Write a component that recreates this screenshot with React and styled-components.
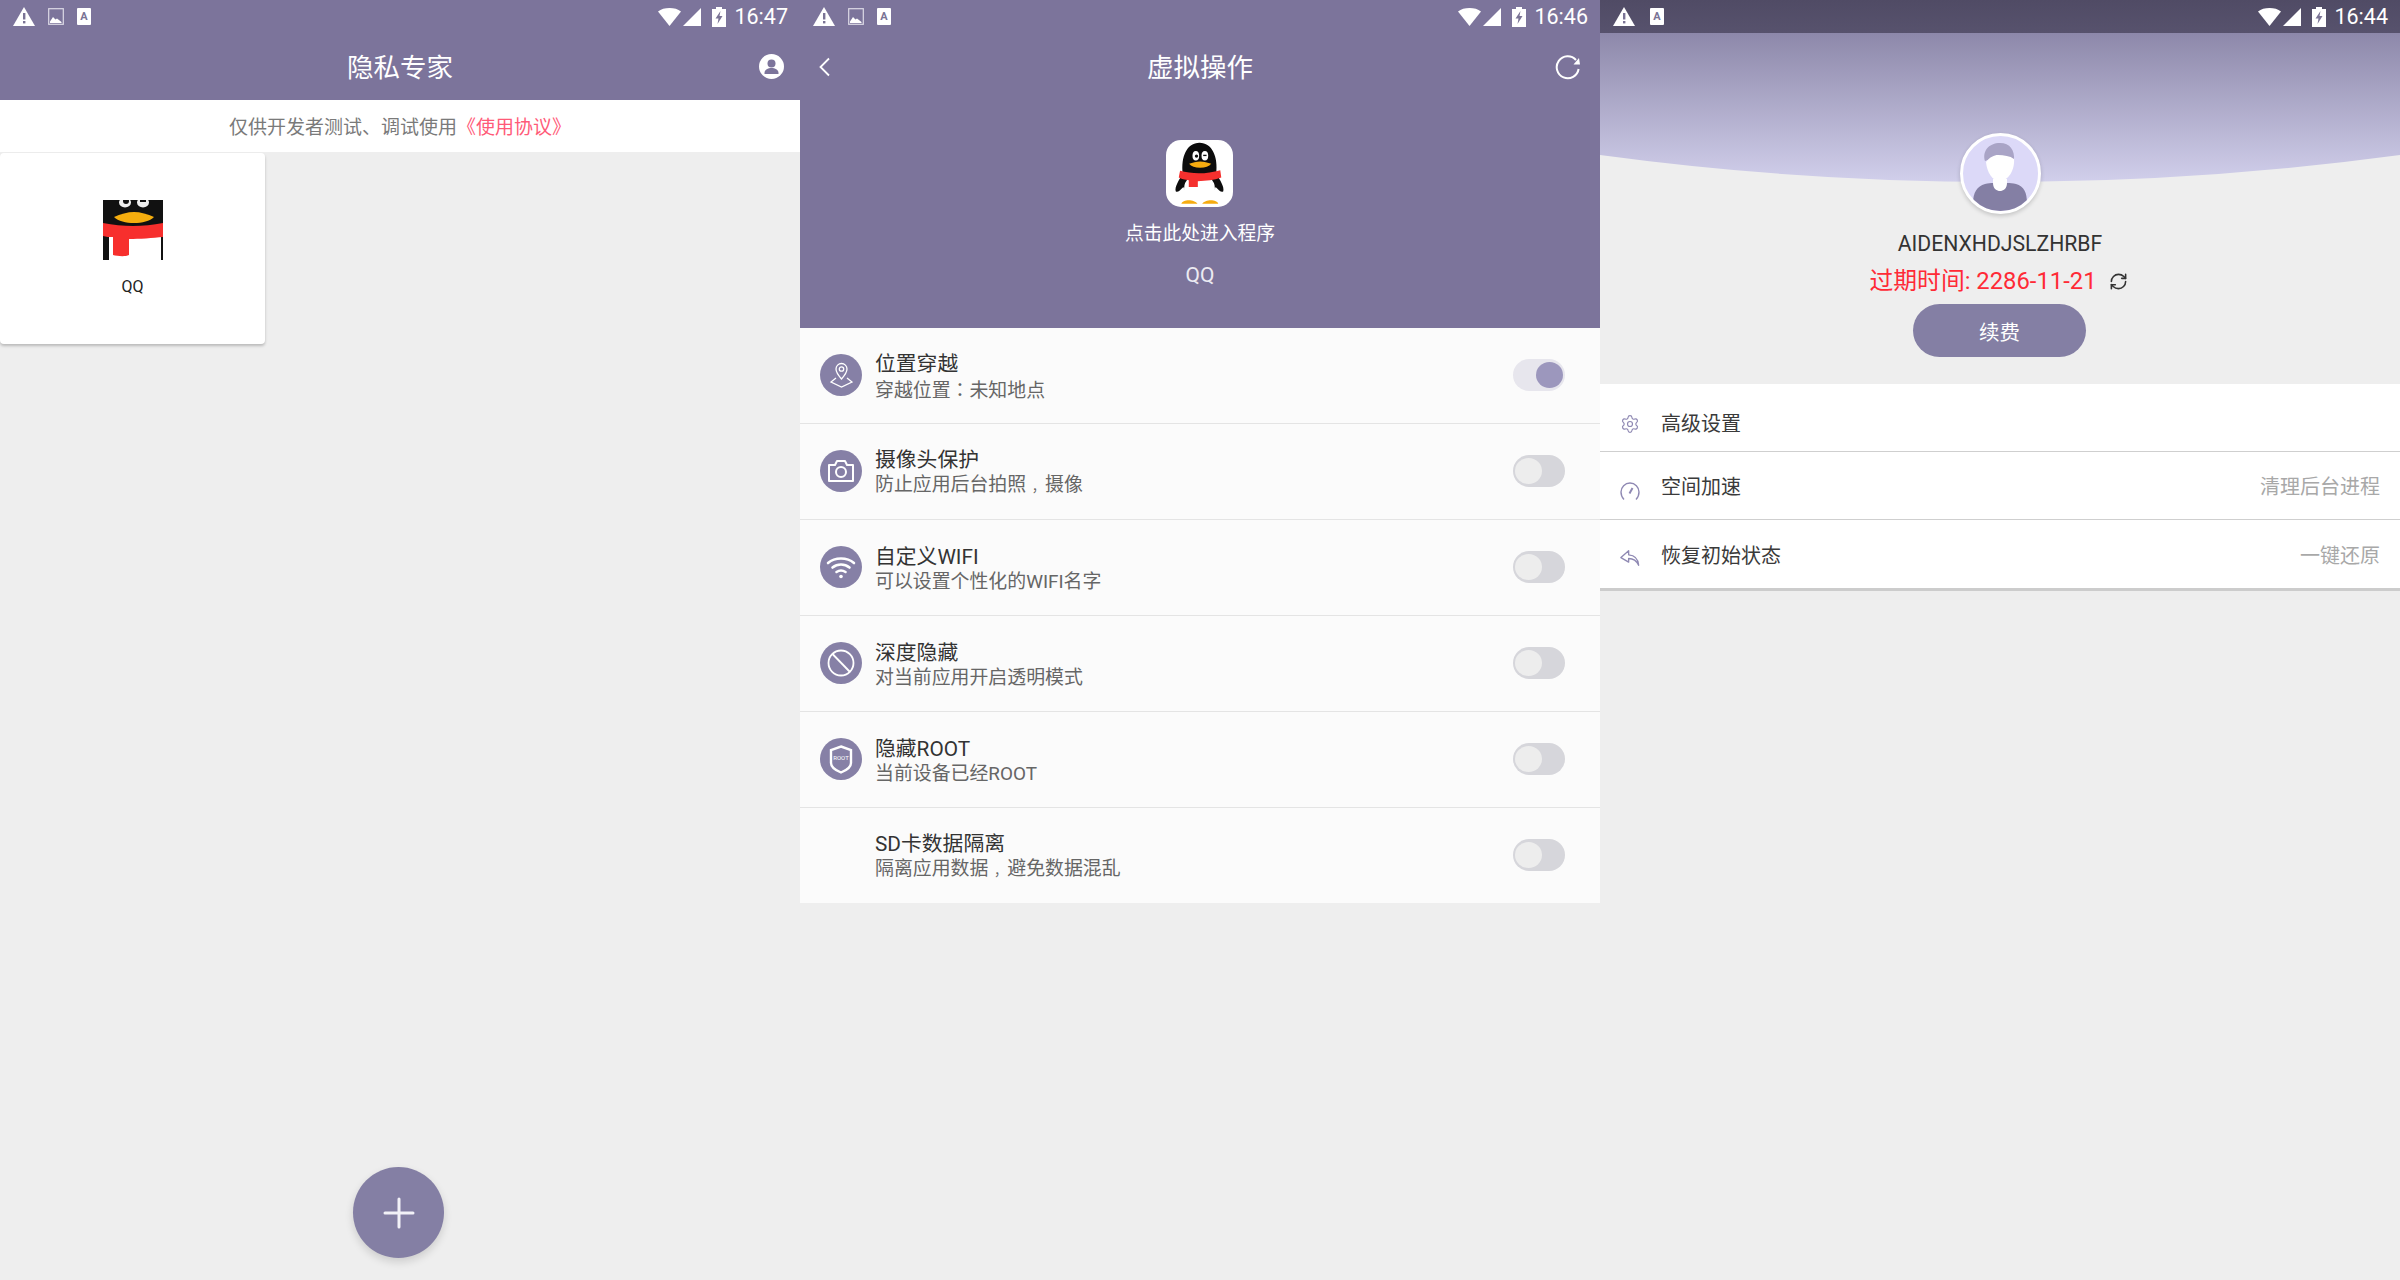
import React from "react";
import styled, { createGlobalStyle } from "styled-components";
import { Settings, RefreshCw } from "lucide-react";

const Global = createGlobalStyle`
  html, body { margin: 0; padding: 0; background: #eee; }
  * { box-sizing: border-box; }
  body { font-family: Roboto, "Noto Sans CJK SC", sans-serif; }
`;

const Page = styled.div`
  display: flex;
  width: 2400px;
  height: 1280px;
  overflow: hidden;
`;
const Panel = styled.section`
  position: relative;
  width: 800px;
  height: 1280px;
  flex: none;
  background: #eeeeee;
  display: flex;
  flex-direction: column;
`;
const StatusBarBox = styled.div`
  height: 33px;
  flex: none;
  display: flex;
  align-items: center;
  justify-content: space-between;
  padding: 0 12px 0 13px;
  background: ${(p) => (p.$dark ? "linear-gradient(#504b65, #57526d)" : "#7c749b")};
  color: #fff;
`;
const IconGroup = styled.div`
  display: flex;
  align-items: center;
  gap: ${(p) => p.$gap || 0}px;
`;
const Spacer = styled.span`
  width: ${(p) => p.$w}px;
`;
const Clock = styled.span`
  font-size: 21.5px;
  line-height: 33px;
  margin-left: 8px;
  width: 54px;
  text-align: right;
`;
const NavBar = styled.header`
  height: 67px;
  flex: none;
  display: grid;
  grid-template-columns: 1fr auto 1fr;
  align-items: center;
  padding: 0 ${(p) => p.$pad}px;
  background: #7c749b;
  color: #fff;
`;
const NavTitle = styled.h1`
  margin: 0;
  padding-top: 2px;
  font-size: 26.5px;
  font-weight: 400;
  line-height: 65px;
`;
const NavSlot = styled.div`
  display: flex;
  align-items: center;
  justify-content: ${(p) => (p.$end ? "flex-end" : "flex-start")};
`;
const Notice = styled.div`
  height: 52px;
  flex: none;
  padding-bottom: 2px;
  display: flex;
  align-items: center;
  justify-content: center;
  background: #fff;
  font-size: 19px;
  color: #7a7a7a;
`;
const NoticeLink = styled.span`
  color: #ff5a78;
`;
const Card = styled.div`
  width: 265px;
  height: 191px;
  margin-top: 1px;
  padding-top: 47px;
  background: #fff;
  border-radius: 4px;
  box-shadow: 0 2px 3px rgba(0, 0, 0, 0.22);
  display: flex;
  flex-direction: column;
  align-items: center;
`;
const CardLabel = styled.span`
  margin-top: 17px;
  font-size: 16px;
  line-height: 20px;
  color: #222;
`;
const Fab = styled.button`
  position: absolute;
  left: 353px;
  top: 1167px;
  width: 91px;
  height: 91px;
  border: 0;
  padding: 0;
  border-radius: 50%;
  background: #847fa4;
  box-shadow: 0 4px 8px rgba(0, 0, 0, 0.14);
  display: flex;
  align-items: center;
  justify-content: center;
`;

const Hero = styled.div`
  height: 328px;
  flex: none;
  background: #7c749b;
`;
const AppInfo = styled.div`
  display: flex;
  flex-direction: column;
  align-items: center;
  color: #fff;
  padding-top: 40px;
`;
const AppIconBox = styled.div`
  width: 67px;
  height: 67px;
  margin-left: -1px;
  border-radius: 15px;
  background: #fff;
  overflow: hidden;
`;
const Enter = styled.span`
  margin-top: 14px;
  font-size: 18.8px;
  line-height: 26px;
`;
const AppName = styled.span`
  margin-top: 15px;
  font-size: 21px;
  line-height: 26px;
  color: #ecebf2;
`;
const SwitchList = styled.div`
  background: #fbfbfb;
  display: flex;
  flex-direction: column;
`;
const SwitchRow = styled.div`
  height: 96px;
  display: flex;
  align-items: center;
  padding: 0 35px 0 20px;
  border-bottom: 1px solid #e4e4e4;
  &:last-child { height: 95px; border-bottom: 0; }
`;
const RoundIcon = styled.div`
  width: 42px;
  height: 42px;
  flex: none;
  margin-top: -1px;
  border-radius: 50%;
  background: ${(p) => (p.$empty ? "transparent" : "#8680a6")};
  display: flex;
  align-items: center;
  justify-content: center;
`;
const RowText = styled.div`
  margin-left: 13px;
  flex: 1;
  display: flex;
  flex-direction: column;
`;
const RowTitle = styled.span`
  padding-top: 3px;
  font-size: 20.8px;
  line-height: 24px;
  color: #333;
`;
const RowSub = styled.span`
  font-size: 18.9px;
  line-height: 25px;
  color: #666;
`;
const Colon = styled.span`
  font-family: "Noto Sans CJK TC", sans-serif;
`;
const Comma = styled.span`
  padding-left: 0.3em;
  font-size: 0.7em;
  padding-left: 0.43em;
`;
const Track = styled.div`
  width: 52px;
  height: 32px;
  flex: none;
  margin-top: -1px;
  border-radius: 16px;
  padding: 3px 2px;
  display: flex;
  justify-content: ${(p) => (p.$on ? "flex-end" : "flex-start")};
  background: ${(p) => (p.$on ? "#e7e6ed" : "#d6d6db")};
`;
const Thumb = styled.div`
  width: 27px;
  height: 26px;
  border-radius: 50%;
  background: ${(p) => (p.$on ? "#9c97bd" : "#ededed")};
`;

const Wave = styled.svg`
  display: block;
  width: 800px;
  height: 149px;
  flex: none;
`;
const Profile = styled.div`
  margin-top: -49px;
  display: flex;
  flex-direction: column;
  align-items: center;
  position: relative;
`;
const Avatar = styled.div`
  width: 81px;
  height: 81px;
  border-radius: 50%;
  border: 3px solid #fff;
  background: #dcd9f8;
  overflow: hidden;
  box-shadow: 0 2px 4px rgba(0, 0, 0, 0.18);
`;
const UserName = styled.div`
  margin-top: 16px;
  font-size: 21.2px;
  line-height: 28px;
  color: #333;
`;
const ExpiryLine = styled.div`
  margin-top: 7px;
  height: 32px;
  padding-right: 3px;
  display: flex;
  align-items: center;
  gap: 12px;
  color: #ff2a36;
  font-size: 23.8px;
  line-height: 32px;
`;
const RenewButton = styled.button`
  margin-top: 7px;
  margin-left: -1px;
  width: 173px;
  height: 53px;
  border: 0;
  border-radius: 27px;
  background: #847fa4;
  color: #fff;
  font-family: inherit;
  font-size: 20.5px;
`;
const Menu = styled.div`
  margin-top: 27px;
  background: #fff;
  display: flex;
  flex-direction: column;
  border-bottom: 3px solid #cccccc;
`;
const MenuRow = styled.div`
  height: ${(p) => p.$h}px;
  display: flex;
  align-items: center;
  padding: ${(p) => p.$top}px 20px 0 20px;
  border-bottom: 1px solid #cfcfcf;
  &:last-child { border-bottom: 0; }
`;
const MenuIcon = styled.div`
  width: 20px;
  flex: none;
  display: flex;
  justify-content: center;
  color: #8f89b3;
  margin-top: ${(p) => p.$shift || 0}px;
`;
const MenuLabel = styled.span`
  margin-left: 21px;
  flex: 1;
  font-size: 20px;
  line-height: 28px;
  color: #3a3a3a;
`;
const MenuHint = styled.span`
  font-size: 20px;
  line-height: 28px;
  color: #a8a8a8;
`;

const Warn = () => (
  <svg width="22" height="19" viewBox="0 0 22 19">
    <path d="M11 0 22 19H0Z" fill="#fff" />
    <rect x="10" y="6" width="2.4" height="6.5" fill="#7a7395" />
    <rect x="10" y="14" width="2.4" height="2.4" fill="#7a7395" />
  </svg>
);
const Pic = () => (
  <svg width="16" height="17" viewBox="0 0 16 17">
    <rect x=".7" y=".7" width="14.6" height="15.6" fill="none" stroke="#dcdae6" strokeWidth="1.2" />
    <path d="M2 13.5 5 9l2.5 2.5 1.5-1 4.5 3.5V15H2Z" fill="#fff" />
  </svg>
);
const Doc = () => (
  <svg width="14" height="17" viewBox="0 0 14 17">
    <path d="M1 0H13a1 1 0 0 1 1 1V16a1 1 0 0 1-1 1H1a1 1 0 0 1-1-1V1a1 1 0 0 1 1-1Z" fill="#fff" />
    <text x="7" y="12" textAnchor="middle" fontSize="11" fontWeight="700" fontFamily="Roboto" fill="#7a7395">A</text>
  </svg>
);
const WifiFull = () => (
  <svg width="23" height="18" viewBox="0 0 23 18">
    <path d="M0 3.5C3 1 7 0 11.5 0S20 1 23 3.5L11.5 18Z" fill="#fff" />
  </svg>
);
const Signal = () => (
  <svg width="18" height="18" viewBox="0 0 18 18">
    <path d="M18 0V18H0Z" fill="#fff" />
  </svg>
);
const Battery = () => (
  <svg width="14" height="20" viewBox="0 0 14 20">
    <path d="M4 0H10V2H14V20H0V2H4Z" fill="#fff" />
    <path d="M8.5 4 3.5 11.5H6.5L5.5 17 10.5 9H7.5Z" fill="#7a7395" />
  </svg>
);

const StatusBar = ({ time, dark, compact }) => (
  <StatusBarBox $dark={dark}>
    <IconGroup $gap={compact ? 15 : 13}>
      <Warn />
      {!compact && <Pic />}
      <Doc />
    </IconGroup>
    <IconGroup>
      <WifiFull />
      <Spacer $w={2} />
      <Signal />
      <Spacer $w={11} />
      <Battery />
      <Clock>{time}</Clock>
    </IconGroup>
  </StatusBarBox>
);

const UserBadge = () => (
  <svg width="25" height="25" viewBox="0 0 25 25">
    <circle cx="12.5" cy="12.5" r="12.5" fill="#fff" />
    <circle cx="12.5" cy="9.5" r="4" fill="#7c749b" />
    <path d="M5.5 19c0-3.500 3.500-5 7-5s7 1.500 7 5v1h-14Z" fill="#7c749b" />
  </svg>
);
const Back = () => (
  <svg width="14" height="20" viewBox="0 0 14 20">
    <path d="M11 1.500 2.500 10l8.500 8.500" fill="none" stroke="#fff" strokeWidth="1.8" />
  </svg>
);
const Reload = () => (
  <svg width="27" height="26" viewBox="0 0 27 26">
    <path d="M21 6A11 11 0 1 0 23.600 15" fill="none" stroke="#fff" strokeWidth="2" />
    <path d="M18.500 10.500 25 10.500 24 4Z" fill="#fff" />
  </svg>
);

const PenguinFull = () => (
  <svg width="67" height="67" viewBox="0 0 200 200">
    <path d="M52 140C42 150 34 158 29 153c-4-12 10-34 21-52C44 50 62 8 100 8s56 42 50 93c11 18 25 40 21 52-5 5-13-3-23-13-6 28-90 28-96 0Z" fill="#0d0d0d" />
    <ellipse cx="100" cy="144" rx="46" ry="42" fill="#fff" />
    <path d="M42 92c36 10 80 10 120-2l3 22c-22 8-44 10-70 11v17H68v-20c-12-1-22-4-30-8Z" fill="#f5302e" />
    <ellipse cx="89" cy="47" rx="10" ry="14" fill="#fff" />
    <ellipse cx="116" cy="47" rx="10" ry="14" fill="#fff" />
    <circle cx="91" cy="48" r="5" fill="#111" />
    <rect x="111" y="44" width="10" height="4" fill="#111" />
    <path d="M69 71c10-4 22-7 33-7s23 3 33 7c-6 8-18 12-33 12s-27-4-33-12Z" fill="#f6ac10" />
    <path d="M46 190c1-6 12-10 22-10 10 0 22 4 26 10ZM108 190c4-6 16-10 26-10s21 4 22 10Z" fill="#f6ac10" />
  </svg>
);
const PenguinCrop = () => (
  <svg width="60" height="60" viewBox="0 0 60 60">
    <rect width="60" height="60" fill="#111" />
    <ellipse cx="22" cy="2.500" rx="6" ry="5" fill="#eee" />
    <ellipse cx="40" cy="2.500" rx="6" ry="5" fill="#eee" />
    <ellipse cx="23" cy="1" rx="3" ry="3" fill="#111" />
    <rect x="37" y="0" width="6" height="2" fill="#111" />
    <path d="M11 17c6-3 14-5 20-5s14 2 20 5c-4 4-12 6-20 6s-16-2-20-6Z" fill="#f5ad0e" />
    <rect x="6" y="37" width="52" height="23" fill="#fff" />
    <path d="M0 23c20 4 40 4 60 0V37c-10 1-24 2-34 2V55c-4 2-12 1-16 0V37C6 37 3 37 0 36Z" fill="#f72f2d" />
  </svg>
);

const PinGlyph = () => (
  <svg width="23" height="26" viewBox="0 0 23 26" fill="none" stroke="#fff" strokeWidth="1.3">
    <path d="M11.500 17C8 13 6 10 6 7a5.500 5.500 0 0 1 11 0c0 3-2 6-5.500 10Z" />
    <circle cx="11.500" cy="7" r="2.200" />
    <path d="M6 16 1 20l10.500 5L22 20l-5-4" />
  </svg>
);
const CameraGlyph = () => (
  <svg width="28" height="26" viewBox="0 0 28 26" fill="none" stroke="#fff" strokeWidth="2">
    <path d="M2 7h6l2-4h8l2 4h6v16H2Z" strokeLinejoin="round" />
    <circle cx="14" cy="14" r="5" />
  </svg>
);
const WifiGlyph = () => (
  <svg width="30" height="23" viewBox="0 0 30 23" fill="none" stroke="#fff" strokeWidth="2.600" strokeLinecap="round">
    <path d="M2 7c7-6 19-6 26 0" />
    <path d="M6.500 11.500c5-4 12-4 17 0" />
    <path d="M10.500 16c3-2 6-2 9 0" />
    <circle cx="15" cy="20.500" r="1.800" fill="#fff" stroke="none" />
  </svg>
);
const BanGlyph = () => (
  <svg width="30" height="30" viewBox="0 0 30 30" fill="none" stroke="#fff" strokeWidth="1.800">
    <circle cx="15" cy="15" r="12.500" />
    <path d="M6.500 6 24 24" />
  </svg>
);
const ShieldGlyph = () => (
  <svg width="24" height="29" viewBox="0 0 24 29">
    <path d="M12 1.500 22 5v13c0 4-5 7.500-10 9.500C7 25.500 2 22 2 18V5Z" fill="none" stroke="#fff" strokeWidth="2.400" />
    <text x="12" y="15" textAnchor="middle" fontSize="6" fontFamily="Roboto" fill="#fff">ROOT</text>
  </svg>
);

const AvatarArt = () => (
  <svg width="75" height="75" viewBox="3 3 75 75" style={{ display: "block" }}>
    <path d="M25 28C22 18 29 10 40 10c10 0 15 7 14 18-6-6-20-4-29 0Z" fill="#a9a4c6" />
    <path d="M26 29c4-5 8-7 12-7 6 0 12 1 16 4 1 11-6 22-14 22s-13-9-14-19Z" fill="#fff" />
    <path d="M33 46h14v7a7 7 0 0 1-14 0Z" fill="#fff" />
    <path d="M13 70c0-10 4-17 12-19 3-1 6-1 8-1 0 6 4 8 7 8s7-2 7-8c3 0 6 0 9 1 8 2 11 9 11 19v12H13Z" fill="#847fa4" />
  </svg>
);
const Gauge = () => (
  <svg width="20" height="22" viewBox="0 0 20 22" fill="none" stroke="currentColor" strokeWidth="1.400">
    <path d="M4 20.500C2 18.500 1 16 1 13a9 9 0 0 1 18 0c0 3-1 5.500-3 7.500" />
    <path d="M9.500 14.500 12.500 9" strokeWidth="2" />
  </svg>
);
const ReplyGlyph = () => (
  <svg width="22" height="18" viewBox="0 0 22 18" fill="none" stroke="currentColor" strokeWidth="1.500" strokeLinejoin="round">
    <path d="M9.500 1 1 8.500l8.500 5V9.500c5 0 9 3 11 7.500C20 10 16 6 9.500 5.500Z" />
  </svg>
);

const rows = [
  { t: "位置穿越", s: <>穿越位置<Colon>：</Colon>未知地点</>, on: true, icon: <PinGlyph /> },
  { t: "摄像头保护", s: <>防止应用后台拍照<Comma>，</Comma>摄像</>, icon: <CameraGlyph /> },
  { t: "自定义WIFI", s: "可以设置个性化的WIFI名字", icon: <WifiGlyph /> },
  { t: "深度隐藏", s: "对当前应用开启透明模式", icon: <BanGlyph /> },
  { t: "隐藏ROOT", s: "当前设备已经ROOT", icon: <ShieldGlyph /> },
  { t: "SD卡数据隔离", s: <>隔离应用数据<Comma>，</Comma>避免数据混乱</> },
];

export default function App() {
  return (
    <Page>
      <Global />
      <Panel>
        <StatusBar time="16:47" />
        <NavBar $pad={16}>
          <NavSlot />
          <NavTitle>隐私专家</NavTitle>
          <NavSlot $end><UserBadge /></NavSlot>
        </NavBar>
        <Notice>
          仅供开发者测试、调试使用<NoticeLink>《使用协议》</NoticeLink>
        </Notice>
        <Card>
          <PenguinCrop />
          <CardLabel>QQ</CardLabel>
        </Card>
        <Fab aria-label="add">
          <svg width="32" height="32" viewBox="0 0 32 32">
            <path d="M16 2v28M2 16h28" stroke="#f2f1f7" strokeWidth="3" strokeLinecap="round" />
          </svg>
        </Fab>
      </Panel>

      <Panel>
        <Hero>
          <StatusBar time="16:46" />
          <NavBar $pad={18}>
            <NavSlot><Back /></NavSlot>
            <NavTitle>虚拟操作</NavTitle>
            <NavSlot $end><Reload /></NavSlot>
          </NavBar>
          <AppInfo>
            <AppIconBox><PenguinFull /></AppIconBox>
            <Enter>点击此处进入程序</Enter>
            <AppName>QQ</AppName>
          </AppInfo>
        </Hero>
        <SwitchList>
          {rows.map((r) => (
            <SwitchRow key={r.t}>
              <RoundIcon $empty={!r.icon}>{r.icon}</RoundIcon>
              <RowText>
                <RowTitle>{r.t}</RowTitle>
                <RowSub>{r.s}</RowSub>
              </RowText>
              <Track $on={r.on}><Thumb $on={r.on} /></Track>
            </SwitchRow>
          ))}
        </SwitchList>
      </Panel>

      <Panel>
        <StatusBar time="16:44" dark compact />
        <Wave viewBox="0 0 800 149" preserveAspectRatio="none">
          <defs>
            <linearGradient id="waveFill" x1="0" y1="0" x2="0" y2="1">
              <stop offset="0" stopColor="#8d88aa" />
              <stop offset="1" stopColor="#d1cfeb" />
            </linearGradient>
          </defs>
          <path d="M0 0H800V122Q400 176 0 122Z" fill="url(#waveFill)" />
        </Wave>
        <Profile>
          <Avatar><AvatarArt /></Avatar>
          <UserName>AIDENXHDJSLZHRBF</UserName>
          <ExpiryLine>
            <span>过期时间: 2286-11-21</span>
            <RefreshCw size={19} color="#333" strokeWidth={2} />
          </ExpiryLine>
          <RenewButton>续费</RenewButton>
        </Profile>
        <Menu>
          <MenuRow $h={68} $top={12}>
            <MenuIcon><Settings size={22} strokeWidth={1.4} /></MenuIcon>
            <MenuLabel>高级设置</MenuLabel>
          </MenuRow>
          <MenuRow $h={68} $top={3}>
            <MenuIcon $shift={5}><Gauge /></MenuIcon>
            <MenuLabel>空间加速</MenuLabel>
            <MenuHint>清理后台进程</MenuHint>
          </MenuRow>
          <MenuRow $h={68} $top={3}>
            <MenuIcon $shift={4}><ReplyGlyph /></MenuIcon>
            <MenuLabel>恢复初始状态</MenuLabel>
            <MenuHint>一键还原</MenuHint>
          </MenuRow>
        </Menu>
      </Panel>
    </Page>
  );
}
